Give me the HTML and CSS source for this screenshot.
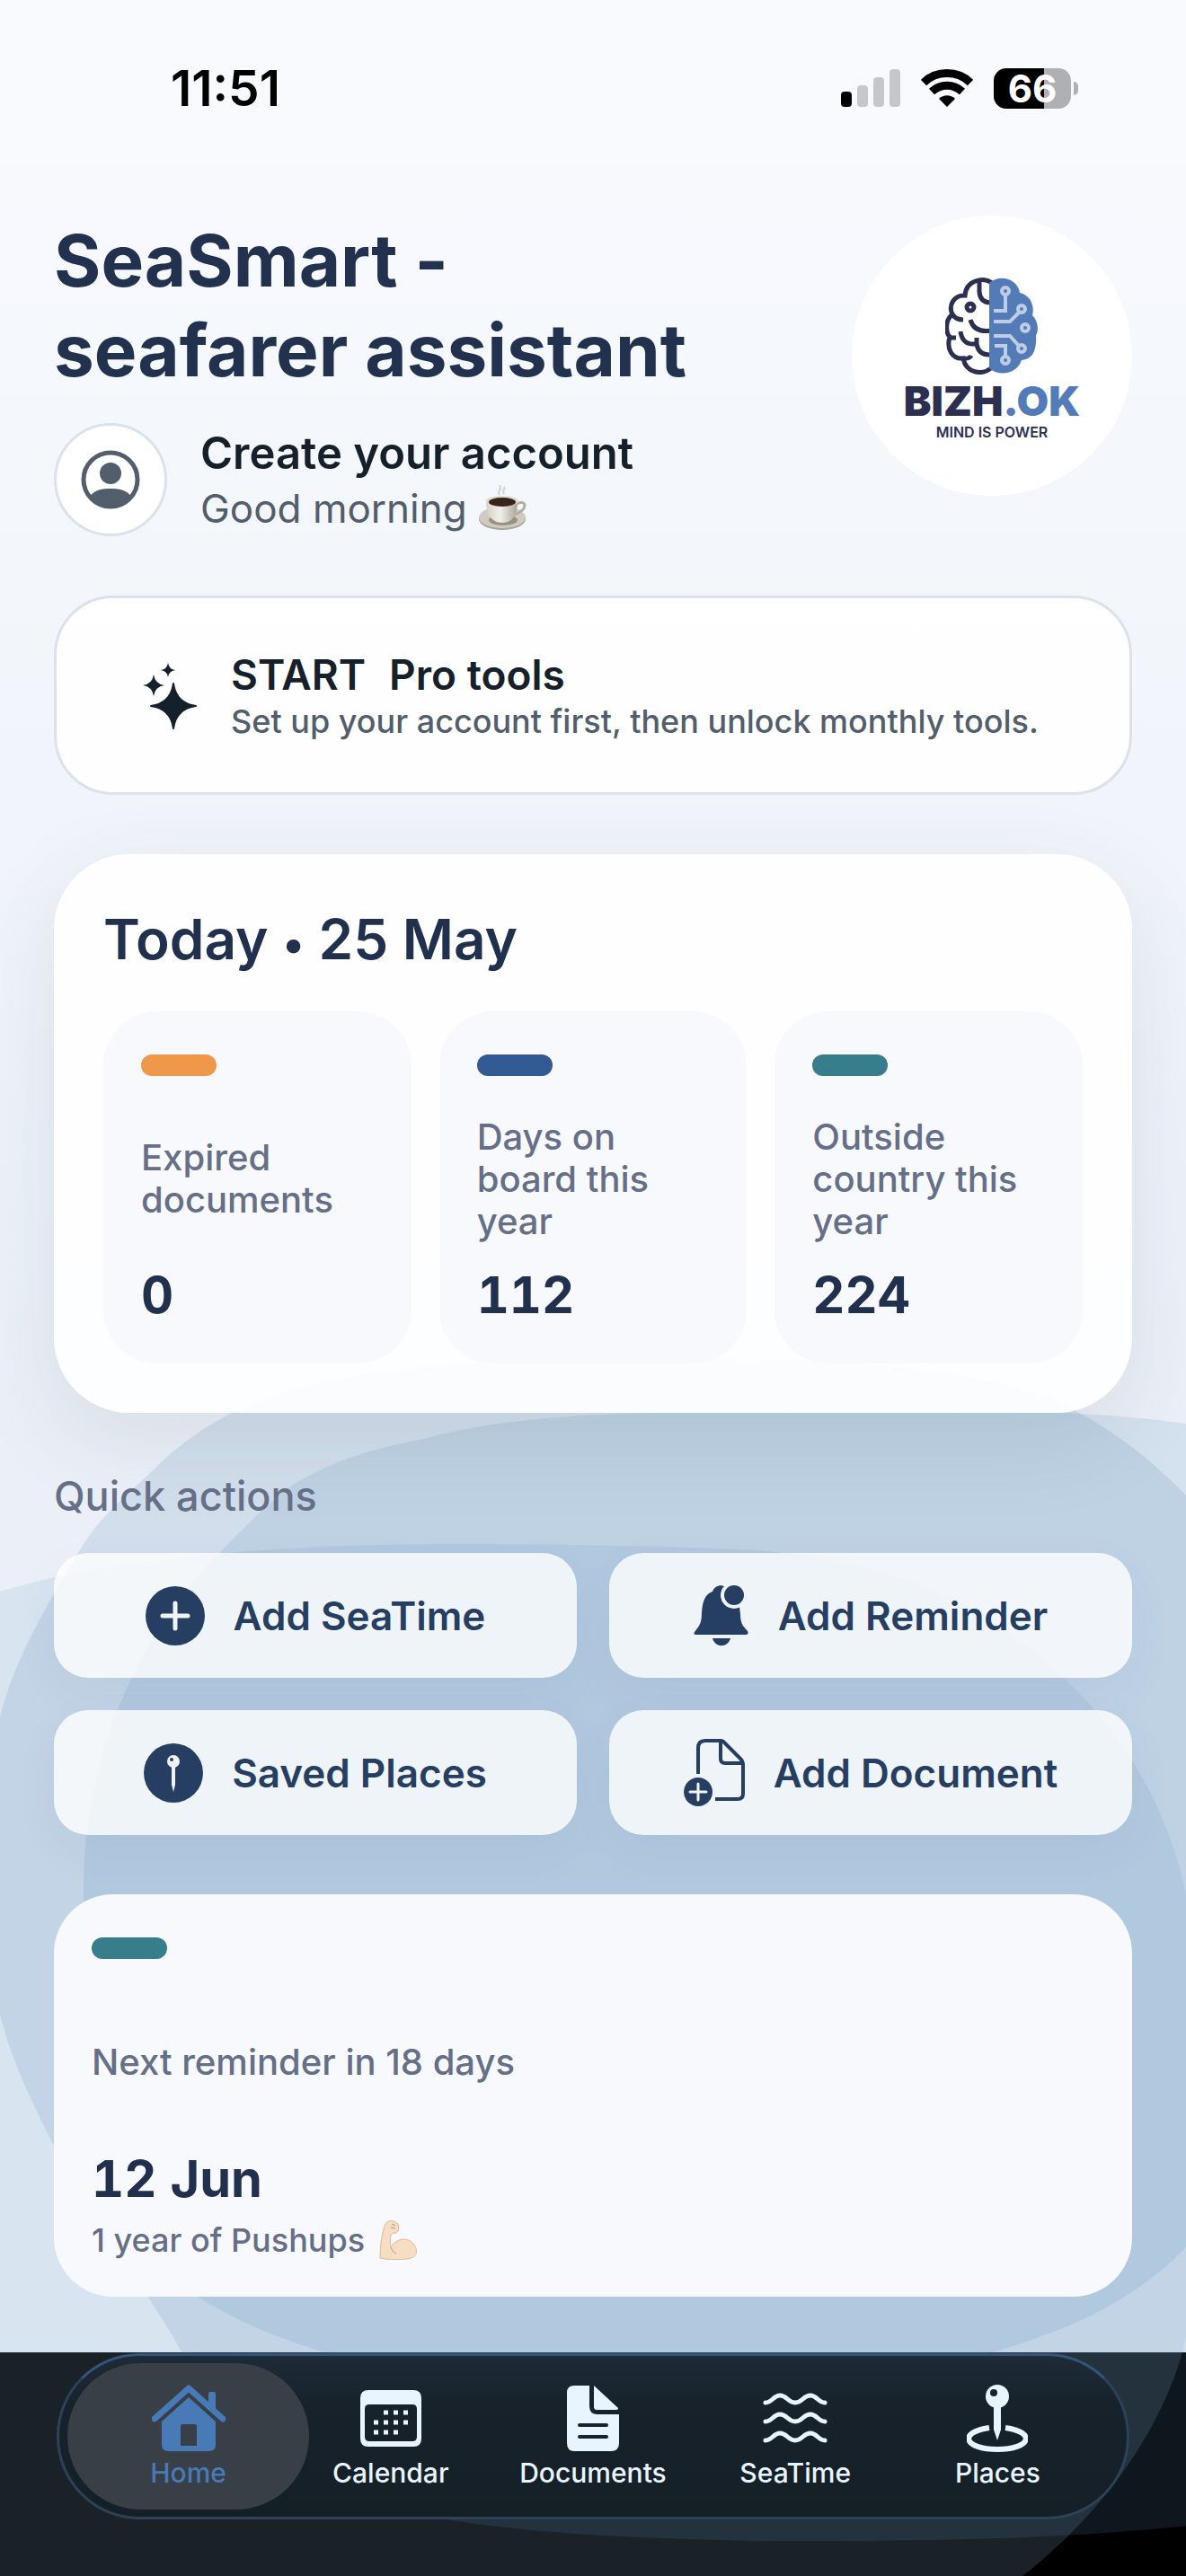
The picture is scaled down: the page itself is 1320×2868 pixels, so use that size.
FILE: index.html
```html
<!doctype html>
<html lang="en">
<head>
	<meta charset="UTF-8">
	<meta name="viewport" content="width=device-width, initial-scale=1">
	<title>SeaSmart</title>
	<link rel="stylesheet" href="styles.css">
</head>
<body>

	<!-- background shapes -->
	<svg class="waves" viewBox="0 0 1320 2868" preserveAspectRatio="none" aria-hidden="true">
		<path class="wave-a" d="M-40 1785 C120 1725 380 1719 510 1719 C640 1719 760 1722 842 1726 C1010 1740 1100 1790 1183 1867 C1250 1930 1290 2000 1313 2080 C1350 2220 1365 2440 1316 2619 C1290 2710 1225 2800 1138 2868 L-40 2868 Z"/>
		<path class="wave-c" d="M780 1512 C950 1512 1080 1525 1170 1557 C1260 1600 1300 1645 1340 1685 L1340 2810 C1200 2826 1050 2829 912 2829 C800 2829 620 2826 497 2805 C350 2770 250 2710 202 2618 C170 2560 110 2480 59 2387 C20 2310 10 2280 0 2243 C-25 2130 -20 2010 0 1912 C15 1850 50 1790 88 1727 C110 1690 135 1670 164 1643 C200 1605 245 1575 290 1560 C400 1515 600 1512 780 1512 Z"/>
		<path class="wave-d" d="M93 2110 C92 2010 115 1930 152 1857 C180 1800 215 1755 253 1720 C275 1697 298 1675 320 1657 C365 1628 410 1614 467 1603 C530 1585 610 1577 673 1575 C800 1569 1060 1569 1178 1573 C1240 1575 1285 1580 1340 1588 L1340 2480 C1290 2540 1230 2575 1162 2600 C1060 2640 900 2660 720 2660 C560 2660 460 2650 358 2618 C300 2600 260 2582 220 2557 C130 2480 95 2280 93 2110 Z"/>
	</svg>

	<div class="status">
		<span class="time">11:51</span>
		<div class="status-icons">
			<svg width="66" height="42" viewBox="0 0 66 42">
				<rect x="0" y="25" width="12" height="17" rx="4" fill="#000"/>
				<rect x="18" y="18" width="12" height="24" rx="4" fill="#c5c7cb"/>
				<rect x="36" y="9" width="12" height="33" rx="4" fill="#c5c7cb"/>
				<rect x="54" y="0" width="12" height="42" rx="4" fill="#c5c7cb"/>
			</svg>
			<svg width="58" height="42" viewBox="0 0 58 42">
				<g fill="none" stroke="#000" stroke-width="9">
					<path d="M3 15 C17 1 41 1 55 15"/>
					<path d="M12 25 C22 16 36 16 46 25"/>
				</g>
				<path d="M29 42 L20 33 C25 28 33 28 38 33 Z"/>
			</svg>
			<div class="battery"><span>66</span></div>
		</div>
	</div>

	<main>
		<header class="top">
			<div class="top-text">
				<h1>SeaSmart -<br>seafarer assistant</h1>
				<a class="account" href="#">
					<span class="avatar">
						<svg width="66" height="66" viewBox="0 0 66 66">
							<circle cx="33" cy="33" r="30" fill="none" stroke="#535e6c" stroke-width="5"/>
							<circle cx="33" cy="26" r="12" fill="#535e6c"/>
							<path d="M10 52 C15 44 24 43 33 43 C42 43 51 44 56 52 C44 68 22 68 10 52 Z" fill="#535e6c"/>
						</svg>
					</span>
					<span class="account-text">
						<span class="account-name">Create your account</span>
						<span class="greeting">Good morning
							<svg width="56" height="52" viewBox="0 0 56 52">
								<defs>
									<linearGradient id="cup" x1="0" x2="1">
										<stop offset="0" stop-color="#d6d1c6"/>
										<stop offset=".45" stop-color="#f1efe9"/>
										<stop offset="1" stop-color="#aaa496"/>
									</linearGradient>
								</defs>
								<ellipse cx="27" cy="38" rx="26" ry="12" fill="#a9a497"/>
								<ellipse cx="27" cy="36" rx="26" ry="12" fill="#cfcbc0"/>
								<ellipse cx="28" cy="39" rx="16" ry="6" fill="#979184"/>
								<path d="M43 21 C54 15 57 28 40 33" fill="none" stroke="#b3ada0" stroke-width="3"/>
								<path d="M9 18 C9 31 14 42 27 42 C40 42 44 31 44 18 Z" fill="url(#cup)"/>
								<ellipse cx="27" cy="18" rx="18" ry="6" fill="#dedace"/>
								<ellipse cx="27" cy="19" rx="15" ry="5" fill="#38241a"/>
								<path d="M24 11 C20 7 28 5 24 0 M29 10 C26 7 31 5 29 2" fill="none" stroke="#cfd2d7" stroke-width="2"/>
							</svg>
						</span>
					</span>
				</a>
			</div>
			<div class="logo">
				<svg width="104" height="108" viewBox="0 0 104 108">
					<g fill="none" stroke="#2d2f51" stroke-width="5">
						<path d="M52 6 C42 -1 23 3 22 20 C10 19 3 31 8 41 C-1 48 1 62 5 66 C1 80 8 91 20 90 C23 106 41 110 52 100"/>
						<path d="M38 4 V16 Q39 28 51 28 M8 41 Q12 47 20 47 M5 67 H12 M17 60 Q19 74 31 74 H35 V67 M35 74 Q37 86 49 86 M18 90 Q27 91 29 87 M28 47 Q32 62 52 59"/>
						<circle cx="28" cy="33" r="4"/>
					</g>
					<path d="M49 6 C62 -5 81 2 83 17 C94 19 100 31 97 42 C104 49 104 60 101 64 C102 80 98 91 85 92 C80 107 61 111 49 101 Z" fill="#527bb8"/>
					<g fill="none" stroke="#bccde6" stroke-width="4">
						<path d="M54 37 H67 V20 M54 49 H72 L82 39 M54 65 H72 L82 76 M55 76 H67 V88"/>
						<circle cx="67" cy="15" r="4"/>
						<circle cx="85" cy="35" r="4"/>
						<circle cx="89" cy="56" r="4"/>
						<circle cx="85" cy="79" r="4"/>
						<circle cx="67" cy="92" r="4"/>
					</g>
				</svg>
				<span class="logo-name">BIZH<b>.OK</b></span>
				<span class="logo-sub">MIND IS POWER</span>
			</div>
		</header>

		<a class="pro" href="#">
			<svg width="60" height="74" viewBox="0 0 60 74">
				<g fill="#16202a">
					<path d="M34 23 Q37 45 59 48 Q37 51 34 73 Q31 51 9 48 Q31 45 34 23 Z" stroke="#16202a" stroke-width="2" stroke-linejoin="round"/>
					<path d="M12 13 Q13.500 23.500 24 25 Q13.500 26.500 12 37 Q10.500 26.500 0 25 Q10.500 23.500 12 13 Z"/>
					<path d="M28 0 Q29 7 36 8 Q29 9 28 16 Q27 9 20 8 Q27 7 28 0 Z"/>
				</g>
			</svg>
			<span class="pro-text">
				<span class="pro-title"><span>START</span><span>Pro tools</span></span>
				<span class="pro-note">Set up your account first, then unlock monthly tools.</span>
			</span>
		</a>

		<section class="today">
			<h2>Today <span class="dot">•</span> 25 May</h2>
			<div class="stats">
				<div class="stat">
					<i class="pill orange"></i>
					<p class="label">Expired documents</p>
					<strong>0</strong>
				</div>
				<div class="stat">
					<i class="pill blue"></i>
					<p class="label">Days on board this year</p>
					<strong>112</strong>
				</div>
				<div class="stat">
					<i class="pill teal"></i>
					<p class="label">Outside country this year</p>
					<strong>224</strong>
				</div>
			</div>
		</section>

		<h3>Quick actions</h3>
		<div class="actions">
			<button type="button">
				<svg width="66" height="66" viewBox="0 0 66 66">
					<circle cx="33" cy="33" r="33" fill="#253e62"/>
					<path d="M33 19 V47 M19 33 H47" stroke="#f0f3f8" stroke-width="5" stroke-linecap="round"/>
				</svg>
				Add SeaTime
			</button>
			<button type="button">
				<svg width="62" height="68" viewBox="0 0 62 68">
					<path d="M1 52 C7 44 9 42 9 30 C10 17 13 10 21 7 C24 -2 36 -2 40 7 C50 11 51 22 52 32 C52 44 56 46 60 51 Q62 55 57 55 H4 Q-1 55 1 52 Z" fill="#253e62"/>
					<path d="M21 59 H41 C38 70 24 70 21 59 Z" fill="#253e62"/>
					<circle cx="45" cy="11" r="15" fill="#f0f3f8"/>
					<circle cx="45" cy="11" r="11" fill="#253e62"/>
				</svg>
				Add Reminder
			</button>
			<button type="button">
				<svg width="66" height="66" viewBox="0 0 66 66">
					<circle cx="33" cy="33" r="33" fill="#253e62"/>
					<circle cx="33" cy="20" r="7" fill="#f0f3f8"/>
					<circle cx="31" cy="18" r="2" fill="#253e62"/>
					<path d="M31 26 H35 V46 L33 54 L31 46 Z" fill="#f0f3f8"/>
				</svg>
				Saved Places
			</button>
			<button type="button">
				<svg width="68" height="76" viewBox="0 0 68 76">
					<g fill="none" stroke="#253e62" stroke-width="4">
						<path d="M16 39 V10 Q16 2 24 2 H41 Q44 2 46 5 L63 22 Q66 25 66 29 V61 Q66 67 60 67 H35"/>
						<path d="M41 2 V22 Q41 27 46 27 H65"/>
					</g>
					<circle cx="16" cy="59" r="16" fill="#253e62"/>
					<path d="M16 50 V68 M7 59 H25" stroke="#f0f3f8" stroke-width="3" stroke-linecap="round"/>
				</svg>
				Add Document
			</button>
		</div>

		<section class="reminder">
			<i class="pill teal"></i>
			<p class="label">Next reminder in 18 days</p>
			<strong>12 Jun</strong>
			<p class="note">1 year of Pushups
				<svg width="44" height="44" viewBox="0 0 44 44">
					<path d="M1 42 C1 28 3 14 7 4 Q10 -1 16 1 L21 4 Q23 11 19 14 Q13 14 13 17 C12 21 12 27 13 30 C19 20 31 18 38 26 C45 35 41 42 31 43 C21 44 10 44 1 42 Z" fill="#f5dec3" stroke="#e0b894" stroke-width="1"/>
					<path d="M14 4 L18 6 M13 8 L18 9 M13 30 Q14 35 19 37" fill="none" stroke="#c99470" stroke-width="1"/>
				</svg>
			</p>
		</section>
	</main>

	<footer>
		<nav>
			<a class="tab active" href="#">
				<svg width="82" height="78" viewBox="0 0 82 78">
					<path d="M3 38 L41 4 L79 38" fill="none" stroke="#477ab6" stroke-width="7" stroke-linecap="round" stroke-linejoin="round"/>
					<path d="M63 10 Q63 8 65 8 H69 Q71 8 71 10 V31 L63 24 Z" fill="#477ab6"/>
					<path fill-rule="evenodd" d="M41 14 L71 41 V67 Q71 74 64 74 H18 Q11 74 11 67 V41 Z M32 46 V68 H50 V46 Q50 44 48 44 H34 Q32 44 32 46 Z" fill="#477ab6"/>
				</svg>
				Home
			</a>
			<a class="tab" href="#">
				<svg width="70" height="78" viewBox="0 0 70 78">
					<path fill-rule="evenodd" d="M10 6 H60 Q69 6 69 15 V60 Q69 69 60 69 H10 Q1 69 1 60 V15 Q1 6 10 6 Z M11 22 Q6 22 6 27 V58 Q6 63 11 63 H59 Q64 63 64 58 V27 Q64 22 59 22 Z" fill="#e8f5ff"/>
					<path d="M27 31 H60 M16 42 H60 M16 53 H49" stroke="#e8f5ff" stroke-width="5" stroke-dasharray="5 6"/>
				</svg>
				Calendar
			</a>
			<a class="tab" href="#">
				<svg width="60" height="78" viewBox="0 0 60 78">
					<path d="M9 1 H26 V24 Q26 33 35 33 H59 V65 Q59 74 50 74 H9 Q1 74 1 65 V9 Q1 1 9 1 Z" fill="#e8f5ff"/>
					<path d="M31 1 L58 26 Q58 28 56 28 H34 Q31 28 31 25 Z" fill="#e8f5ff"/>
					<path d="M15 45 H45 M15 58 H45" stroke="#17222b" stroke-width="4" stroke-linecap="round"/>
				</svg>
				Documents
			</a>
			<a class="tab" href="#">
				<svg width="74" height="78" viewBox="0 0 74 78">
					<g fill="none" stroke="#e8f5ff" stroke-width="5" stroke-linecap="round">
						<path d="M4 20 C11 20 13 12 20 12 C28 12 29 20 37 20 C45 20 46 12 54 12 C61 12 63 20 70 20"/>
						<path d="M4 41 C11 41 13 33 20 33 C28 33 29 41 37 41 C45 41 46 33 54 33 C61 33 63 41 70 41"/>
						<path d="M4 62 C11 62 13 54 20 54 C28 54 29 62 37 62 C45 62 46 54 54 54 C61 54 63 62 70 62"/>
					</g>
				</svg>
				SeaTime
			</a>
			<a class="tab" href="#">
				<svg width="68" height="78" viewBox="0 0 68 78">
					<path d="M25 48 C-10 53 -3 72 34 72 C71 72 78 53 43 48" fill="none" stroke="#e8f5ff" stroke-width="6"/>
					<circle cx="34" cy="13" r="13" fill="#e8f5ff"/>
					<circle cx="30" cy="9" r="4" fill="#17222b"/>
					<path d="M30 24 H38 V50 L34 62 L30 50 Z" fill="#e8f5ff"/>
				</svg>
				Places
			</a>
		</nav>
	</footer>

</body>
</html>
```
FILE: styles.css
```css
* {
	box-sizing: border-box;
}

body,h1,h2,h3,p {
	margin: 0px;
	padding: 0px;
}

body {
	position: relative;
	min-height: 100vh;
	display: flex;
	flex-direction: column;
	background: linear-gradient(#f9fafe, #f3f7fc 600px, #ebf0f8 1600px);
	color: #20304d;
	font-family: Inter, "Liberation Sans", sans-serif;
}

a {
	color: inherit;
	text-decoration: none;
}

svg {
	flex: none;
}

/*background*/
.waves {
	position: absolute;
	top: 0px;
	left: 0px;
	width: 100%;
	height: 100%;
	z-index: 0;
	pointer-events: none;
}

.wave-a {
	fill: rgba(137,177,206,.19);
}

.wave-c {
	fill: rgba(90,134,178,.17);
}

.wave-d {
	fill: rgba(80,138,190,.15);
}

/*status bar*/
.status {
	display: flex;
	justify-content: space-between;
	align-items: center;
	height: 196px;
	padding: 0px 128px 0px 190px;
	color: #000;
}

.time {
	font-size: 55px;
	font-weight: 600;
}

.status-icons {
	display: flex;
	align-items: center;
	gap: 23px;
}

.battery {
	position: relative;
	width: 86px;
	height: 45px;
	line-height: 45px;
	border-radius: 14px;
	background: linear-gradient(90deg, #000 56px, #aeb0b4 56px);
	color: #fff;
	font-size: 42px;
	font-weight: 700;
	text-align: center;
}

/*battery tip*/
.battery::after {
	content: "";
	position: absolute;
	right: -8px;
	top: 15px;
	width: 5px;
	height: 15px;
	border-radius: 0px 5px 5px 0px;
	background: #aeb0b4;
}

main {
	position: relative;
	z-index: 1;
	flex: 1;
	padding: 44px 60px 62px;
}

/*header*/
.top {
	display: flex;
	justify-content: space-between;
	align-items: flex-start;
	margin-bottom: 66px;
}

h1 {
	font-size: 80px;
	line-height: 100px;
	font-weight: 700;
	color: #22324e;
}

.account {
	display: flex;
	align-items: center;
	gap: 37px;
	margin-top: 31px;
}

.avatar {
	display: flex;
	align-items: center;
	justify-content: center;
	width: 126px;
	height: 126px;
	border: 3px solid #dbe2ec;
	border-radius: 50%;
	background: #fff;
}

.account-text {
	display: flex;
	flex-direction: column;
	padding-top: 4px;
	color: #16202a;
}

.account-name {
	font-size: 49px;
	line-height: 60px;
	font-weight: 600;
}

.greeting {
	display: flex;
	align-items: center;
	gap: 12px;
	font-size: 44px;
	line-height: 62px;
	color: #535e6c;
}

.logo {
	display: flex;
	flex-direction: column;
	align-items: center;
	width: 312px;
	height: 312px;
	padding-top: 69px;
	border-radius: 50%;
	background: #fff;
	color: #2d2f51;
}

.logo-name {
	font-size: 46px;
	line-height: 52px;
	font-weight: 900;
	margin-top: 3px;
}

.logo-name b {
	font-weight: 900;
	color: #527bb8;
}

.logo-sub {
	font-size: 16px;
	line-height: 18px;
	font-weight: 600;
}

/*pro tools*/
.pro {
	display: flex;
	align-items: center;
	gap: 38px;
	min-height: 222px;
	padding: 2px 40px 0px 96px;
	border: 3px solid #dbe2ec;
	border-radius: 66px;
	background: rgba(255,255,255,.9);
	color: #16202a;
}

.pro-text {
	display: flex;
	flex-direction: column;
}

.pro-title {
	display: flex;
	gap: 26px;
	font-size: 46px;
	line-height: 56px;
	font-weight: 600;
}

.pro-note {
	font-size: 36px;
	line-height: 48px;
	font-weight: 500;
	color: #535e6c;
}

/*today*/
.today {
	margin-top: 66px;
	padding: 55px;
	border-radius: 84px;
	background: rgba(255,255,255,.9);
	box-shadow: 0px 30px 100px rgba(40,60,60,.1);
}

h2 {
	font-size: 62px;
	line-height: 80px;
	font-weight: 600;
	color: #20304d;
}

.dot {
	font-size: 49px;
	line-height: 1;
}

.stats {
	display: grid;
	grid-template-columns: repeat(3, 1fr);
	gap: 31px;
	margin-top: 40px;
}

.stat {
	display: flex;
	flex-direction: column;
	min-height: 392px;
	padding: 48px 42px 42px;
	border-radius: 60px;
	background: #f8f9fd;
}

.pill {
	display: block;
	width: 84px;
	height: 24px;
	border-radius: 12px;
}

.orange {
	background: #f09849;
}

.blue {
	background: #315b92;
}

.teal {
	background: #387d8b;
}

.label {
	display: flex;
	flex: 1;
	align-items: center;
	padding-top: 18px;
	font-size: 40px;
	line-height: 47px;
	font-weight: 500;
	color: #656f87;
}

.stat strong,.reminder strong {
	font-size: 56px;
	line-height: 68px;
	font-weight: 700;
	font-variant-numeric: tabular-nums;
}

/*quick actions*/
h3 {
	margin-top: 66px;
	font-size: 45px;
	line-height: 54px;
	font-weight: 500;
	color: #656f87;
}

.actions {
	display: grid;
	grid-template-columns: 1fr 1fr;
	gap: 36px;
	margin-top: 36px;
}

.actions button {
	display: flex;
	align-items: center;
	justify-content: center;
	gap: 32px;
	height: 139px;
	padding: 0px;
	border: none;
	border-radius: 38px;
	background: rgba(255,255,255,.8);
	box-shadow: 0px 18px 50px rgba(60,90,140,.06);
	color: #253e62;
	font-family: inherit;
	font-size: 44px;
	font-weight: 600;
	cursor: pointer;
}

/*next reminder*/
.reminder {
	display: flex;
	flex-direction: column;
	min-height: 448px;
	margin-top: 66px;
	padding: 48px 42px 29px;
	border-radius: 66px;
	background: #f8f9fd;
}

.note {
	display: flex;
	align-items: center;
	gap: 16px;
	font-size: 36px;
	line-height: 68px;
	font-weight: 500;
	color: #656f87;
}

/*tab bar*/
footer {
	height: 249px;
	padding: 1px 63px;
	background: #000;
}

nav {
	position: relative;
	z-index: 1;
	display: grid;
	grid-template-columns: repeat(5, 1fr);
	height: 185px;
	padding: 8px 31px;
	border: 3px solid #2b4258;
	border-top-color: #34557a;
	border-radius: 92px;
	background: linear-gradient(#1e2b38, #17222b 30%, #151f26);
}

.tab {
	position: relative;
	display: flex;
	flex-direction: column;
	align-items: center;
	gap: 2px;
	padding-top: 24px;
	color: #e8f5ff;
	font-size: 30px;
	line-height: 36px;
	font-weight: 500;
}

.active {
	color: #477ab6;
}

/*highlight behind the current tab, wider than its column*/
.active::before {
	content: "";
	position: absolute;
	top: 0px;
	bottom: 0px;
	left: -22px;
	right: -22px;
	z-index: -1;
	border-radius: 82px;
	background: #383f46;
}
```
